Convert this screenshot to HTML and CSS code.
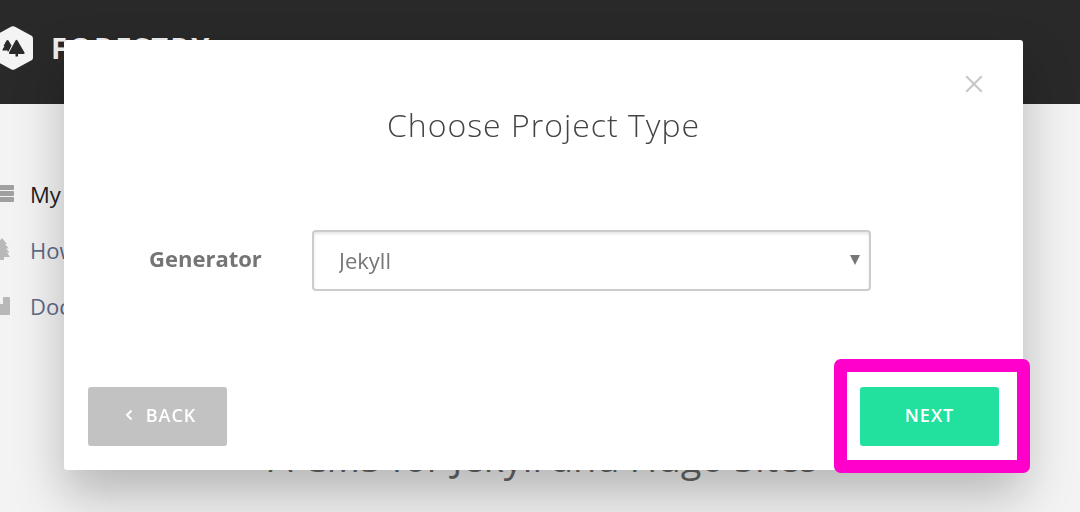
FILE: index.html
```html
<!DOCTYPE html>
<html lang="en">
<head>
    <meta charset="UTF-8">
    <meta name="viewport" content="width=device-width, initial-scale=1">
    <title>Forestry - Choose Project Type</title>
    <link rel="stylesheet" href="styles.css">
</head>

<body>

<!-- Top bar -->
<header class="topbar">
    <svg class="logo" viewBox="0 0 40 44" aria-hidden="true">
        <path fill="#f4f4f4" d="M18.500 .6Q20 -.2 21.500 .6L39 10Q40 11 40 12.500V31.500Q40 33 39 34L21.500 43.400Q20 44.200 18.500 43.400L1 34Q0 33 0 31.500V12.500Q0 11 1 10Z"/>
        <path fill="#292929" d="M13.500 14.500Q14.500 13.500 15.500 14.500L18.500 19.500L15.500 25.500H14.500V24.500H10Q9 24.500 9.500 23.500L11.500 20H10.500Z"/>
        <path fill="#292929" d="M22.500 14.500Q23.500 13 24.500 14.500L31.500 26.500Q32 28 30.500 28H25V30.500H22.500V28H17Q15.500 28 16 26.500Z"/>
    </svg>
    <span class="brand">FORESTRY<sup>™</sup></span>
</header>

<div class="page">
    <nav class="sidebar">
        <a class="active" href="#">
            <svg class="icon" viewBox="0 0 20 20" aria-hidden="true"><rect y="1" width="20" height="5" rx="1"/><rect y="7" width="20" height="5" rx="1"/><rect y="13" width="20" height="5" rx="1"/></svg>
            My Sites
        </a>
        <a href="#">
            <svg class="icon" viewBox="0 0 20 24" aria-hidden="true"><path d="M8 0L13 6H11L15 10.500H12L15.500 14.500H13L16 19H10V22H6V19H0L3 14.500H1L4 10.500H1L5 6H3Z"/></svg>
            How-Tos
        </a>
        <a href="#">
            <svg class="icon" viewBox="0 0 20 20" aria-hidden="true"><path d="M0 1H4V6L6.500 8L9 8V2Q9 1 10 1H15Q16 1 16 2V18Q16 19 15 19H0Z"/></svg>
            Documentation
        </a>
    </nav>
    <main class="content">
        <h1>A CMS for Jekyll and Hugo Sites</h1>
    </main>
</div>

<!-- Project type dialog -->
<div class="overlay">
    <form class="modal" role="dialog" aria-labelledby="modalTitle">
        <button type="button" class="close" aria-label="Close">
            <svg viewBox="0 0 18 18" aria-hidden="true"><path d="M2 2L16 16M16 2L2 16"/></svg>
        </button>
        <h2 id="modalTitle">Choose Project Type</h2>

        <div class="field">
            <label for="generator">Generator</label>
            <div class="select-wrap">
                <select id="generator">
                    <option>Jekyll</option>
                    <option>Hugo</option>
                </select>
                <svg class="arrow" viewBox="0 0 10 10" aria-hidden="true"><path d="M0 0H10L5 10Z"/></svg>
            </div>
        </div>

        <div class="actions">
            <button type="button" class="btn btn-back">
                <svg viewBox="0 0 8 12" aria-hidden="true"><path d="M6.500 1.500L2 6L6.500 10.500"/></svg>
                BACK
            </button>
            <div class="next-wrap">
                <button type="button" class="btn btn-next">NEXT</button>
                <div class="highlight"></div>
            </div>
        </div>
    </form>
</div>

</body>
</html>
```
FILE: styles.css
```css
* {
    box-sizing: border-box;
}
body {
    margin: 0;
    height: 100vh;
    overflow: hidden;
    font-family: "Open Sans", sans-serif;
    background-color: #f3f3f3;
}

/* Top bar */
.topbar {
    display: flex;
    align-items: center;
    gap: 18px;
    height: 104px;
    margin-left: -7px;
    padding-bottom: 8px;
    background-color: #292929;
}
.logo {
    width: 40px;
    height: 44px;
}
.brand {
    padding-bottom: 2px;
    color: #f0f0f0;
    font-size: 29px;
    font-weight: 700;
    letter-spacing: 2px;
}
.brand sup {
    font-size: 8px;
    vertical-align: 12px;
    line-height: 0;
}

/* Page behind the dialog */
.page {
    display: flex;
}
.sidebar {
    flex: 0 0 220px;
    display: flex;
    flex-direction: column;
    margin-left: -6px;
    padding-top: 62px;
}
.sidebar a {
    display: flex;
    align-items: center;
    gap: 16px;
    height: 56px;
    color: #5f6b89;
    font-size: 22px;
    text-decoration: none;
}
.sidebar .active {
    color: #222;
}
.icon {
    width: 20px;
    fill: #b8b8b8;
}
.active .icon {
    fill: #a0a0a0;
}
.content {
    flex: 1;
    padding-right: 208px;
    padding-top: 327px;
    text-align: center;
}
.content h1 {
    margin: 0;
    color: #666;
    font-size: 38px;
    font-weight: 400;
    line-height: 52px;
    white-space: nowrap;
}

/* Dialog */
.overlay {
    position: fixed;
    inset: 0;
    padding: 40px 57px 40px 64px;
}
.modal {
    display: flex;
    flex-direction: column;
    padding: 24px;
    background-color: #fff;
    border-radius: 3px;
    box-shadow: 0 25px 50px rgba(0, 0, 0, 0.25);
}
.close {
    align-self: flex-end;
    width: 40px;
    height: 40px;
    margin-right: 5px;
    padding: 10px;
    border: 0;
    background: none;
}
.close svg {
    display: block;
    width: 20px;
    height: 20px;
    fill: none;
    stroke: #c8c8c8;
    stroke-width: 2;
}
.modal h2 {
    margin: 0;
    color: #444;
    font-size: 32px;
    font-weight: 300;
    line-height: 42px;
    letter-spacing: 1px;
    text-align: center;
}
.field {
    display: flex;
    align-items: center;
    margin: 84px 128px 96px 61px;
}
.field label {
    width: 163px;
    padding-bottom: 5px;
    color: #757575;
    font-size: 22px;
    font-weight: 700;
}
.select-wrap {
    position: relative;
    flex: 1;
}
.select-wrap select {
    display: block;
    width: 100%;
    height: 61px;
    padding: 0 25px 2px;
    appearance: none;
    color: #777;
    font: 22px "Open Sans", sans-serif;
    background-color: #fff;
    border: 2px solid #ccc;
    border-radius: 4px;
    box-shadow: inset 0 2px 3px rgba(0, 0, 0, 0.1);
}
.arrow {
    position: absolute;
    top: 25px;
    right: 11px;
    width: 10px;
    height: 10px;
    fill: #777;
    pointer-events: none;
}
.actions {
    display: flex;
    justify-content: space-between;
}
.btn {
    display: flex;
    align-items: center;
    justify-content: center;
    gap: 13px;
    min-width: 139px;
    height: 59px;
    padding: 0 30px 3px;
    border: 0;
    border-radius: 3px;
    color: #fff;
    font: 600 18px "Open Sans", sans-serif;
    letter-spacing: 1px;
}
.btn svg {
    width: 8px;
    height: 12px;
    fill: none;
    stroke: #fff;
    stroke-width: 2;
}
.btn-back {
    padding-left: 36px;
    background-color: #c2c2c2;
}
.btn-next {
    background-color: #22e19e;
}

/* Marker frame around the next button */
.next-wrap {
    position: relative;
}
.highlight {
    position: absolute;
    inset: -28px -31px -27px -26px;
    border: 13px solid #ff00cb;
    border-radius: 7px;
    pointer-events: none;
}
```
